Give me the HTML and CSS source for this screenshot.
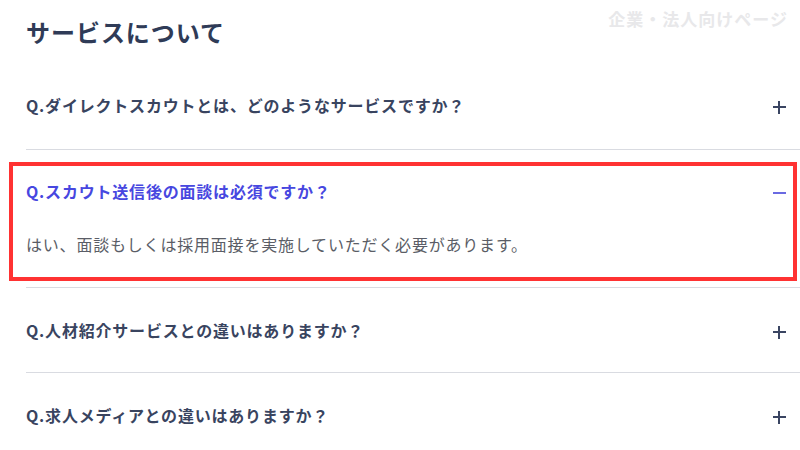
FILE: index.html
```html
<!DOCTYPE html>
<html lang="ja">
<head>
<meta charset="utf-8">
<title>サービスについて</title>
<link rel="stylesheet" href="styles.css">
</head>
<body>
<div class="page">
  <div class="watermark">企業・法人向けページ</div>
  <h2 class="section-title">サービスについて</h2>
  <ul class="faq">
    <li class="faq-item first">
      <div class="faq-q">
        <span class="q-text">Q.ダイレクトスカウトとは、どのようなサービスですか？</span>
        <span class="icon plus"></span>
      </div>
    </li>
    <li class="faq-item open highlighted">
      <div class="faq-q">
        <span class="q-text">Q.スカウト送信後の面談は必須ですか？</span>
        <span class="icon minus"></span>
      </div>
      <p class="faq-a">はい、面談もしくは採用面接を実施していただく必要があります。</p>
    </li>
    <li class="faq-item">
      <div class="faq-q">
        <span class="q-text">Q.人材紹介サービスとの違いはありますか？</span>
        <span class="icon plus"></span>
      </div>
    </li>
    <li class="faq-item">
      <div class="faq-q">
        <span class="q-text">Q.求人メディアとの違いはありますか？</span>
        <span class="icon plus"></span>
      </div>
    </li>
  </ul>
</div>
</body>
</html>
```
FILE: styles.css
```css
* { box-sizing: border-box; }
html, body {
  margin: 0;
  padding: 0;
  background: #ffffff;
  overflow: hidden;
}
body {
  font-family: "Noto Sans CJK JP", "Noto Sans", sans-serif;
  color: #36415c;
}
.page {
  position: relative;
  width: 800px;
  height: 450px;
  padding-left: 26px;
}
.watermark {
  position: absolute;
  top: 6px;
  right: 12px;
  font-size: 17px;
  line-height: 26px;
  font-weight: 700;
  letter-spacing: 0.06em;
  color: #e8e8ea;
}
.section-title {
  margin: 0;
  padding-top: 14px;
  height: 65px;
  font-size: 24px;
  line-height: 36px;
  font-weight: 700;
  letter-spacing: 0.04em;
  color: #2f3b57;
}
.faq {
  list-style: none;
  margin: 0;
  padding: 0;
}
.faq-item {
  position: relative;
  border-bottom: 1px solid #d9dbe1;
}
.faq-q {
  display: flex;
  align-items: center;
  justify-content: space-between;
  padding: 30px 14px 30px 0;
}
.first .faq-q {
  padding-top: 28px;
  padding-bottom: 32px;
}
.q-text {
  font-size: 16px;
  line-height: 24px;
  font-weight: 700;
  letter-spacing: 0.05em;
  color: #39445f;
}
.open .faq-q {
  padding-top: 29px;
  padding-bottom: 29px;
}
.open .q-text {
  color: #4747e0;
}
.icon {
  position: relative;
  width: 13px;
  height: 13px;
  margin-top: 4px;
}
.plus::before,
.plus::after {
  content: "";
  position: absolute;
  background: #3a4562;
}
.plus::before {
  left: 0;
  right: 0;
  top: 5px;
  height: 2px;
}
.plus::after {
  top: 0;
  bottom: 0;
  left: 5px;
  width: 2px;
}
.minus::before {
  content: "";
  position: absolute;
  left: 0;
  right: 0;
  top: 5px;
  height: 2px;
  background: #6a6ae2;
}
.faq-a {
  margin: 0;
  padding: 0 0 31px 0;
  font-size: 16px;
  line-height: 24px;
  letter-spacing: 0.05em;
  color: #5a5d66;
}
.highlighted::after {
  content: "";
  position: absolute;
  top: 12px;
  bottom: 6px;
  left: -17px;
  right: 3px;
  border: 4px solid #ff3232;
  pointer-events: none;
}
```
